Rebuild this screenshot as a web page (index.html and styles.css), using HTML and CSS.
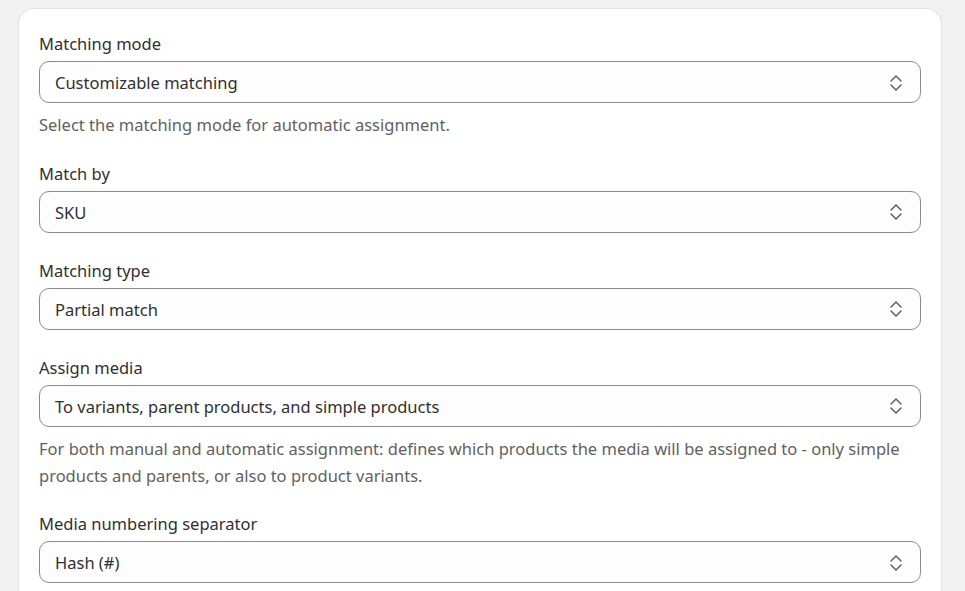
FILE: index.html
```html
<!DOCTYPE html>
<html lang="en">
<head>
<meta charset="utf-8">
<title>Settings</title>
<link rel="stylesheet" href="styles.css">
</head>
<body>
<div class="card">
  <div class="field">
    <label class="label">Matching mode</label>
    <div class="select"><span>Customizable matching</span><svg class="chev" viewBox="0 0 14 18"><path d="M2 7l5-5 5 5M2 11l5 5 5-5"/></svg></div>
    <p class="help">Select the matching mode for automatic assignment.</p>
  </div>
  <div class="field">
    <label class="label">Match by</label>
    <div class="select"><span>SKU</span><svg class="chev" viewBox="0 0 14 18"><path d="M2 7l5-5 5 5M2 11l5 5 5-5"/></svg></div>
  </div>
  <div class="field">
    <label class="label">Matching type</label>
    <div class="select"><span>Partial match</span><svg class="chev" viewBox="0 0 14 18"><path d="M2 7l5-5 5 5M2 11l5 5 5-5"/></svg></div>
  </div>
  <div class="field">
    <label class="label">Assign media</label>
    <div class="select"><span>To variants, parent products, and simple products</span><svg class="chev" viewBox="0 0 14 18"><path d="M2 7l5-5 5 5M2 11l5 5 5-5"/></svg></div>
    <p class="help">For both manual and automatic assignment: defines which products the media will be assigned to - only simple products and parents, or also to product variants.</p>
  </div>
  <div class="field">
    <label class="label">Media numbering separator</label>
    <div class="select"><span>Hash (#)</span><svg class="chev" viewBox="0 0 14 18"><path d="M2 7l5-5 5 5M2 11l5 5 5-5"/></svg></div>
  </div>
</div>
</body>
</html>
```
FILE: styles.css
```css
html, body {
  margin: 0;
  padding: 0;
  background: #f1f1f1;
  font-family: "Noto Sans", "Open Sans", sans-serif;
  color: #303030;
}
body {
  padding: 8px 23px 0 18px;
  height: 591px;
  overflow: hidden;
  box-sizing: border-box;
  display: flex;
  flex-direction: column;
}
.card {
  flex: 1;
  background: #fff;
  border: 1px solid #e3e3e3;
  border-bottom: none;
  border-radius: 16px 16px 0 0;
  padding: 21px 20px 0 20px;
  display: flex;
  flex-direction: column;
  gap: 24px;
  overflow: hidden;
}
.field {
  display: flex;
  flex-direction: column;
  flex: none;
}
.label {
  font-size: 16.5px;
  line-height: 27px;
  margin-bottom: 4px;
}
.select {
  height: 42px;
  flex: none;
  box-sizing: border-box;
  border: 1px solid #8a8a8a;
  border-radius: 10px;
  background: #fdfdfd;
  display: flex;
  align-items: center;
  justify-content: space-between;
  padding: 1px 17px 0 15px;
  font-size: 16.5px;
}
.chev {
  width: 14px;
  height: 18px;
  fill: none;
  stroke: #616161;
  stroke-width: 1.5;
  stroke-linecap: round;
  stroke-linejoin: round;
}
.help {
  margin: 8px 0 -2.5px;
  font-size: 16.5px;
  line-height: 27px;
  color: #616161;
}
```
